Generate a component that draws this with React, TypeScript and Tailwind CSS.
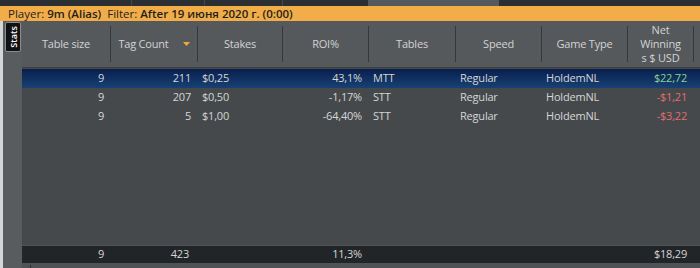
const cols = [
  { key: 'size', label: 'Table size', w: 'w-[89px]', align: 'text-right' },
  { key: 'count', label: 'Tag Count', w: 'w-[87px]', align: 'text-right', sort: true },
  { key: 'stakes', label: 'Stakes', w: 'w-[85px]', align: 'text-left' },
  { key: 'roi', label: 'ROI%', w: 'w-[86px]', align: 'text-right' },
  { key: 'tables', label: 'Tables', w: 'w-[87px]', align: 'text-left' },
  { key: 'speed', label: 'Speed', w: 'w-[86px]', align: 'text-left' },
  { key: 'game', label: 'Game Type', w: 'w-[86px]', align: 'text-left' },
  { key: 'net', label: 'Net Winnings $ USD', w: 'w-[66px]', align: 'text-right' },
]

const rows = [
  { size: '9', count: '211', stakes: '$0,25', roi: '43,1%', tables: 'MTT', speed: 'Regular', game: 'HoldemNL', net: '$22,72', tone: 'text-[#86d68f]', selected: true },
  { size: '9', count: '207', stakes: '$0,50', roi: '-1,17%', tables: 'STT', speed: 'Regular', game: 'HoldemNL', net: '-$1,21', tone: 'text-[#e36d6d]' },
  { size: '9', count: '5', stakes: '$1,00', roi: '-64,40%', tables: 'STT', speed: 'Regular', game: 'HoldemNL', net: '-$3,22', tone: 'text-[#e36d6d]' },
]

const total: Record<string, string> = { size: '9', count: '423', stakes: '', roi: '11,3%', tables: '', speed: '', game: '', net: '$18,29' }

export default function App() {
  return (
    <div className="w-[700px] h-[268px] overflow-hidden flex flex-col bg-[#2c2f32] font-['Open_Sans',sans-serif] text-[11px] tracking-[-0.2px]">
      {/* top tab strip */}
      <div className="h-[6px] flex shrink-0">
        <div className="w-[132px] border-r border-[#44484b]" />
        <div className="w-[73px] border-r border-[#44484b]" />
        <div className="w-[78px] border-r border-[#44484b]" />
        <div className="w-[85px]" />
        <div className="w-[131px] bg-[#55595c]" />
        <div className="flex-1" />
      </div>

      {/* filter bar */}
      <div className="h-[15px] shrink-0 bg-[#f3ad48] text-[#1e1e1e] text-[11.5px] tracking-normal leading-[15px] pl-[8px] whitespace-nowrap">
        Player: <span className="font-semibold">9m (Alias)</span>
        <span className="ml-[6px]">Filter: </span>
        <span className="font-semibold">After 19 июня 2020 г. (0:00)</span>
      </div>

      <div className="flex-1 flex min-h-0">
        <div className="w-[3px] bg-[#d4d6d8]" />
        <div className="w-[19px] bg-[#585c5f] pt-[1px] pl-[2px]">
          <div className="w-[16px] h-[30px] bg-[#111] border border-[#8a8d90] rounded-[2px] flex items-center justify-center">
            <span className="[writing-mode:vertical-rl] rotate-180 text-white font-semibold text-[9px] leading-none tracking-normal">Stats</span>
          </div>
        </div>

        <div className="flex-1 flex flex-col bg-[#45494c] min-w-0">
          {/* header */}
          <div className="h-[47px] shrink-0 flex bg-[#56595c] text-[#d2d3d4] border-b border-[#3c3f42]">
            {cols.map((c) => (
              <div key={c.key} className={`${c.w} shrink-0 flex items-center justify-center py-[5px]`}>
                <div className="h-full w-full flex items-center justify-center gap-[14px] border-r border-[#35383b] px-[4px]">
                  {c.key === 'net' ? (
                    <span className="text-center leading-[14px]">Net<br />Winning<br />s $ USD</span>
                  ) : (
                    <span>{c.label}</span>
                  )}
                  {c.sort && (
                    <svg width="7" height="4" viewBox="0 0 7 4" className="shrink-0">
                      <path d="M0 0H7L3.5 4Z" fill="#f2a93b" />
                    </svg>
                  )}
                </div>
              </div>
            ))}
            <div className="flex-1" />
          </div>

          {/* rows */}
          <div className="pt-[1px]">
            {rows.map((r, i) => (
              <div
                key={i}
                className={`h-[19px] flex items-center text-[#d5d6d7] ${r.selected ? 'bg-gradient-to-b from-[#0a1f4d] to-[#184174]' : ''}`}
              >
                {cols.map((c) => (
                  <div
                    key={c.key}
                    className={`${c.w} shrink-0 ${c.align} ${c.align === 'text-right' ? 'pr-[7px]' : 'pl-[4px]'} ${c.key === 'net' ? r.tone : ''} whitespace-nowrap`}
                  >
                    {(r as Record<string, string | boolean>)[c.key] as string}
                  </div>
                ))}
              </div>
            ))}
          </div>

          <div className="flex-1" />

          {/* totals */}
          <div className="h-[18px] shrink-0 flex items-center bg-[#222528] text-[#d5d6d7] border-t border-[#505457]">
            {cols.map((c) => (
              <div key={c.key} className={`${c.w} shrink-0 ${c.align} ${c.align === 'text-right' ? 'pr-[7px]' : 'pl-[4px]'} whitespace-nowrap`}>
                {c.key === 'count' ? <span className="pr-[2px]">{total[c.key]}</span> : total[c.key]}
              </div>
            ))}
          </div>

          <div className="h-[5px] shrink-0 flex bg-[#4f5356]">
            <div className="w-[8px]" />
            <div className="w-[6px] border-l border-[#2e3134] mt-[2px]" />
          </div>
        </div>
      </div>
    </div>
  )
}
